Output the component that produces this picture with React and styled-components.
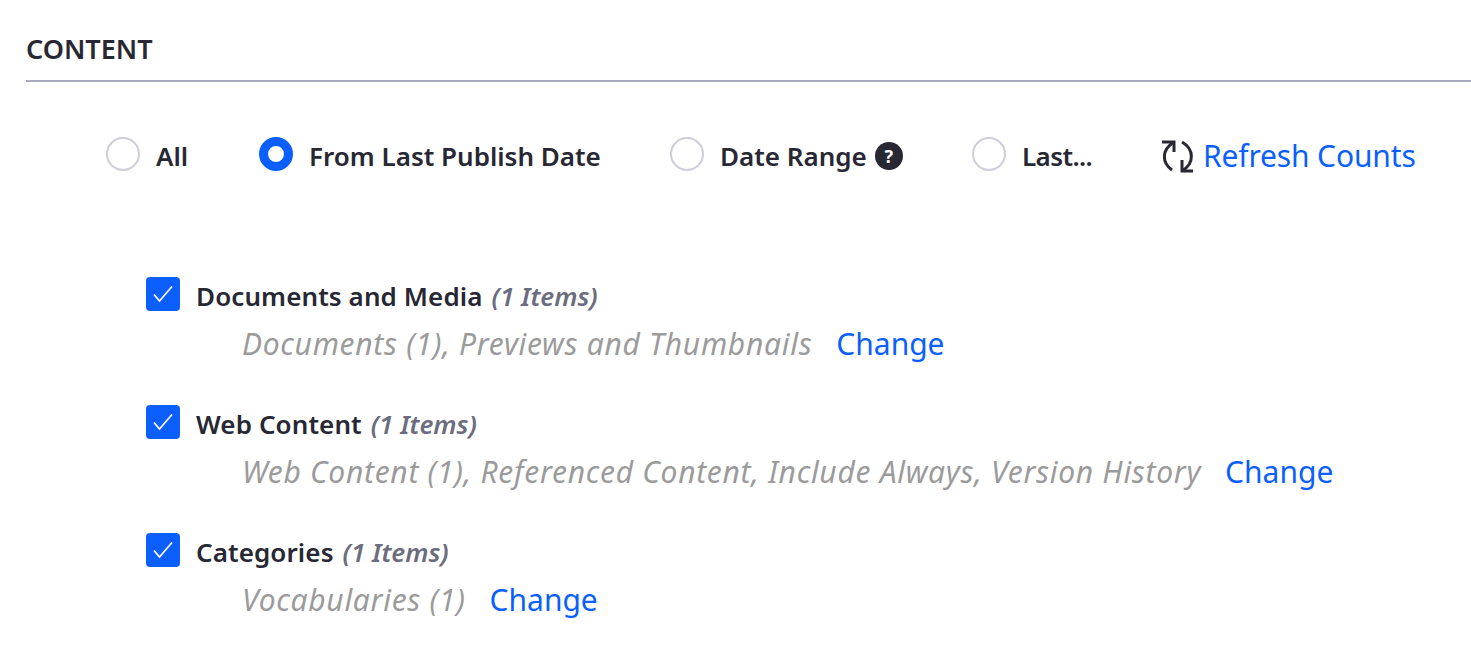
import styled, { createGlobalStyle } from "styled-components";

const GlobalStyle = createGlobalStyle`
  html, body {
    margin: 0;
    background: #fff;
    font-family: "Noto Sans", "Open Sans", sans-serif;
    color: #272833;
  }
`;

const sections = [
  {
    name: "Documents and Media",
    count: "(1 Items)",
    details: "Documents (1), Previews and Thumbnails",
  },
  {
    name: "Web Content",
    count: "(1 Items)",
    details: "Web Content (1), Referenced Content, Include Always, Version History",
  },
  {
    name: "Categories",
    count: "(1 Items)",
    details: "Vocabularies (1)",
  },
];

function CheckIcon() {
  return (
    <svg width="22" height="22" viewBox="0 0 22 22" fill="none">
      <path d="M2 11.5 L7.5 18 L20 3.5" stroke="#fff" strokeWidth="1.7" />
    </svg>
  );
}

function RefreshIcon() {
  return (
    <RefreshSvg viewBox="0 0 34 34" fill="none" stroke="#272833" strokeWidth="3">
      <path d="M11 31 C1 24 0 11 13 3" />
      <path d="M1 3 H13 V13" />
      <path d="M21 3 C33 10 34 24 21 32" />
      <path d="M21 21 V32 H32" />
    </RefreshSvg>
  );
}

export default function App() {
  return (
    <Page>
      <GlobalStyle />
      <Heading>CONTENT</Heading>
      <RadioRow>
        <RadioOption $width={153}>
          <Radio />
          <RadioLabel>All</RadioLabel>
        </RadioOption>
        <RadioOption $width={411}>
          <Radio $checked />
          <RadioLabel>From Last Publish Date</RadioLabel>
        </RadioOption>
        <RadioOption $width={302}>
          <Radio />
          <RadioLabel>Date Range</RadioLabel>
          <HelpBadge>?</HelpBadge>
        </RadioOption>
        <RadioOption $width={189}>
          <Radio />
          <RadioLabel $spacing={-0.6}>Last...</RadioLabel>
        </RadioOption>
        <RefreshLink>
          <RefreshIcon />
          <Link $spacing={-0.15}>Refresh Counts</Link>
        </RefreshLink>
      </RadioRow>
      <SectionList>
        {sections.map((section) => (
          <Section key={section.name}>
            <SectionTitle>
              <Checkbox>
                <CheckIcon />
              </Checkbox>
              <SectionName>{section.name}</SectionName>
              <ItemCount>{section.count}</ItemCount>
            </SectionTitle>
            <DetailRow>
              <Details>{section.details}</Details>
              <Link>Change</Link>
            </DetailRow>
          </Section>
        ))}
      </SectionList>
    </Page>
  );
}

const Page = styled.div`
  width: 1471px;
  height: 666px;
  padding: 30px 0 0 26px;
  box-sizing: border-box;
  overflow: hidden;
`;
const Heading = styled.h2`
  margin: 0;
  height: 50px;
  line-height: 37px;
  font-size: 27px;
  font-weight: 600;
  border-bottom: 2px solid #a7a9bc;
`;
const RadioRow = styled.div`
  display: flex;
  align-items: center;
  height: 36px;
  margin-top: 56px;
  padding-left: 80px;
`;
const RadioOption = styled.div`
  display: flex;
  align-items: center;
  width: ${(p) => p.$width}px;
  flex: none;
`;
const Radio = styled.span`
  width: 34px;
  height: 34px;
  margin-bottom: 4px;
  box-sizing: border-box;
  border-radius: 50%;
  flex: none;
  background: #fff;
  border: ${(p) => (p.$checked ? "9px solid #0b5fff" : "2px solid #cdced9")};
`;
const RadioLabel = styled.span`
  margin-left: 16px;
  font-size: 26px;
  font-weight: 600;
  line-height: 36px;
  letter-spacing: ${(p) => p.$spacing ?? 0}px;
  white-space: nowrap;
`;
const HelpBadge = styled.span`
  width: 28px;
  height: 28px;
  margin-left: 8px;
  border-radius: 50%;
  background: #272833;
  color: #fff;
  font-size: 18px;
  font-weight: 700;
  line-height: 28px;
  text-align: center;
  flex: none;
`;
const RefreshLink = styled.div`
  display: flex;
  align-items: center;
  gap: 8px;
`;
const RefreshSvg = styled.svg`
  width: 34px;
  height: 34px;
  flex: none;
  overflow: visible;
`;
const Link = styled.a`
  color: #0b5fff;
  font-size: 30px;
  line-height: 40px;
  letter-spacing: ${(p) => p.$spacing ?? 0}px;
  white-space: nowrap;
`;
const SectionList = styled.div`
  display: flex;
  flex-direction: column;
  gap: 24px;
  margin-top: 104px;
  padding-left: 120px;
`;
const Section = styled.div`
  display: flex;
  flex-direction: column;
  height: 104px;
`;
const SectionTitle = styled.div`
  display: flex;
  align-items: center;
  height: 36px;
`;
const Checkbox = styled.span`
  display: flex;
  align-items: center;
  justify-content: center;
  width: 34px;
  height: 34px;
  margin-bottom: 4px;
  border-radius: 4px;
  background: #0b5fff;
  flex: none;
`;
const SectionName = styled.span`
  margin-left: 16px;
  font-size: 26px;
  font-weight: 600;
  letter-spacing: 0.1px;
  white-space: nowrap;
`;
const ItemCount = styled.em`
  margin-left: 9px;
  font-size: 26px;
  font-weight: 600;
  color: #6b6c7e;
  white-space: nowrap;
`;
const DetailRow = styled.div`
  display: flex;
  align-items: center;
  gap: 24px;
  height: 40px;
  margin-top: 10px;
  padding-left: 97px;
`;
const Details = styled.em`
  margin-top: -2px;
  margin-left: -1px;
  color: #9b9b9b;
  font-size: 30px;
  letter-spacing: 0.7px;
  white-space: nowrap;
`;
